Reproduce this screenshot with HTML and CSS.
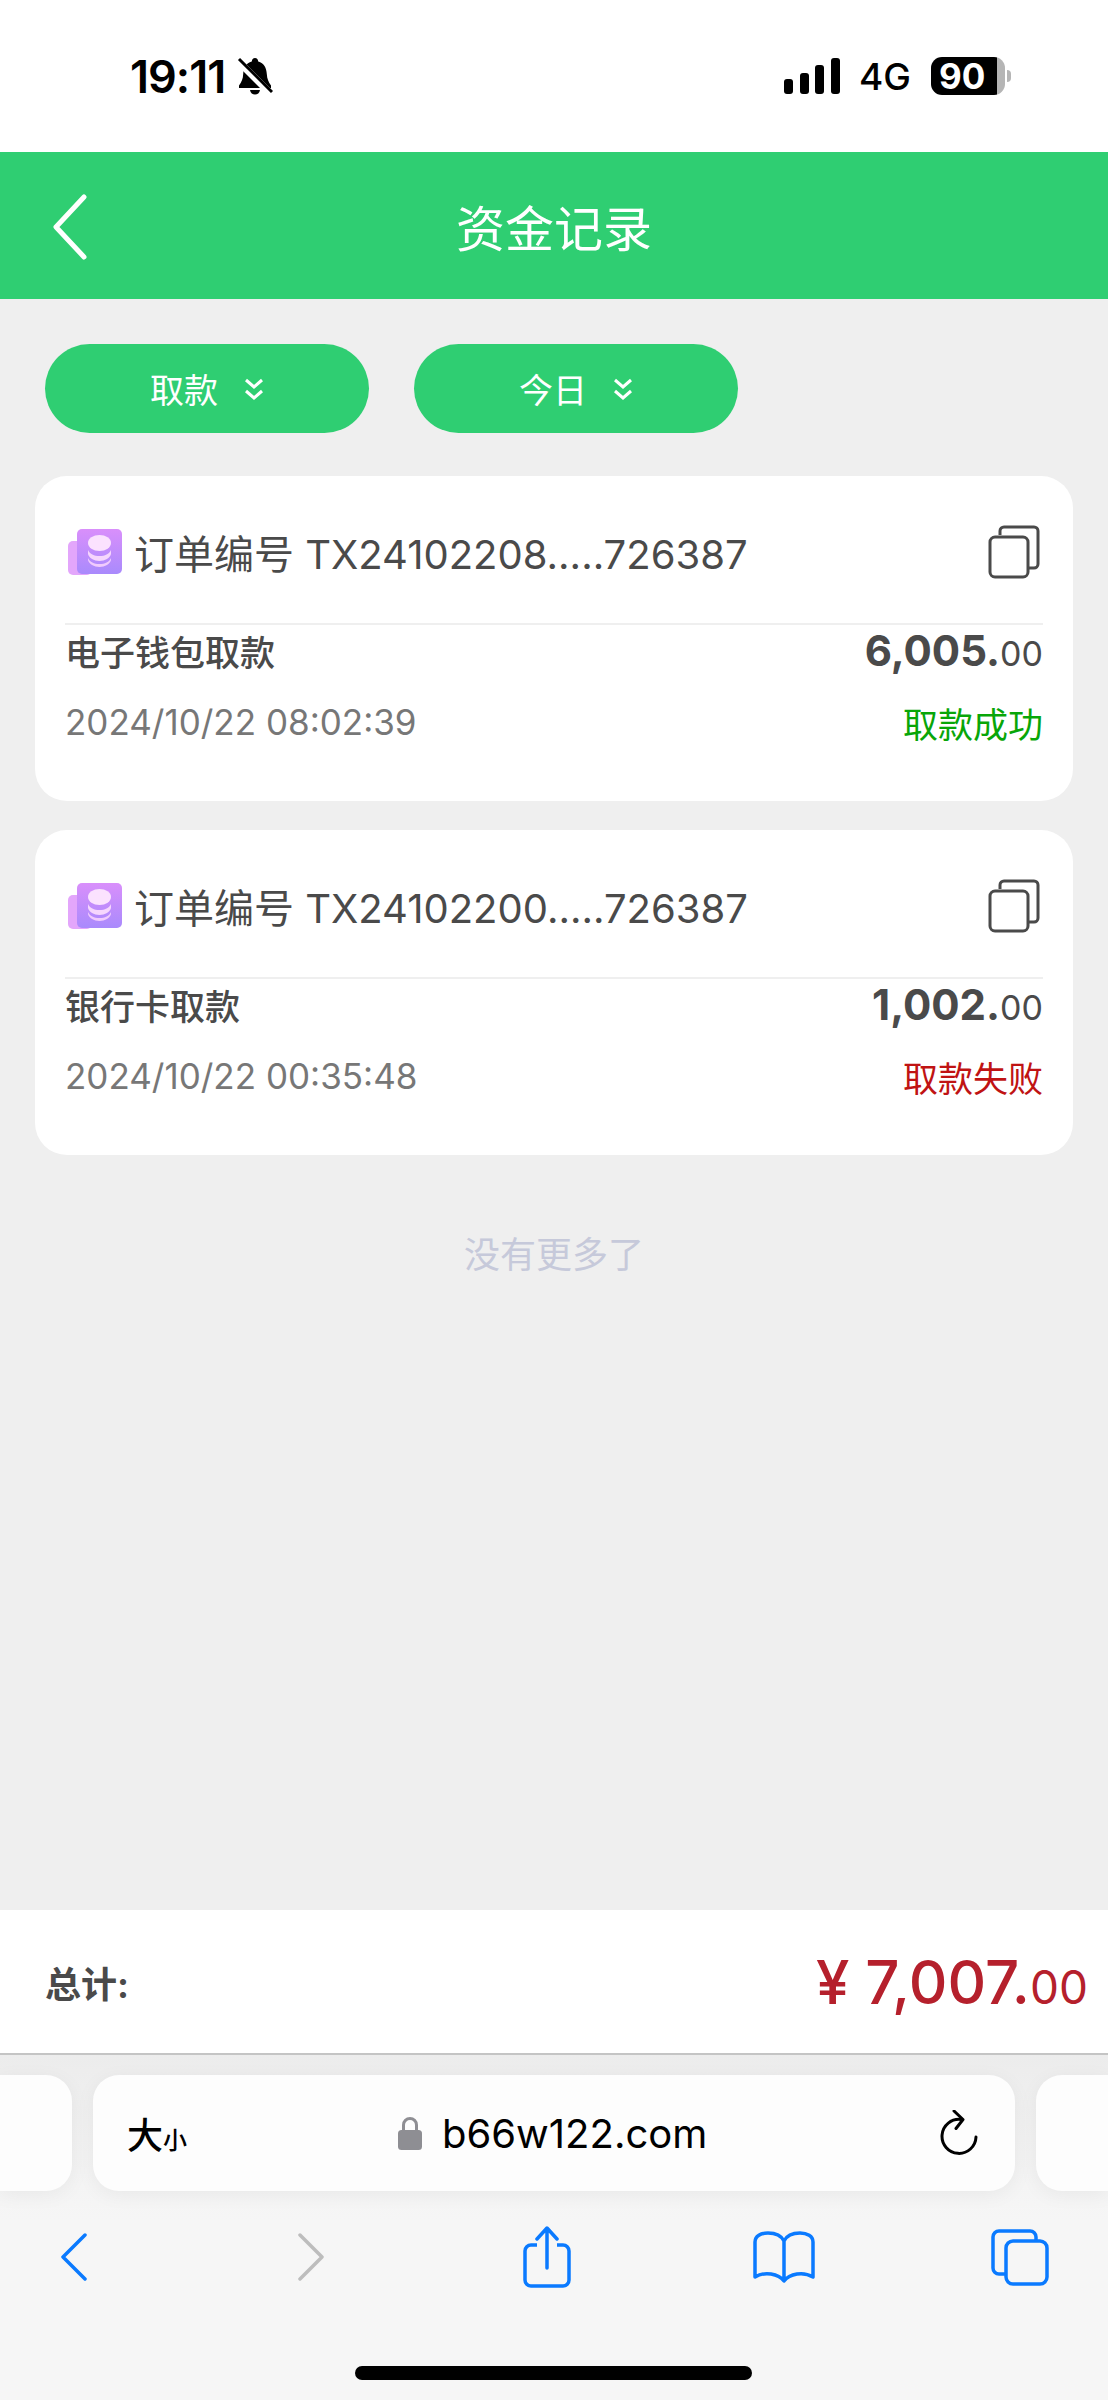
FILE: index.html
```html
<!DOCTYPE html>
<html lang="zh-CN">
<head>
<meta charset="UTF-8">
<meta name="viewport" content="width=device-width, initial-scale=1.0">
<title>资金记录</title>
<link rel="stylesheet" href="styles.css">
</head>
<body>
<div class="status-bar">
    <div class="status-left">
        <span class="clock">19:11</span>
        <svg class="bell" viewBox="0 0 36 38" width="36" height="38">
            <path d="M18 1c2 0 3 1.500 3.200 3.500C27 6 29.500 11 29.800 17c.3 5 1.700 8 4.200 11.500V31H2v-2.500C4.500 25 6 22 6.200 17 6.500 11 9 6 14.800 4.500 15 2.500 16 1 18 1z" fill="#000"/>
            <path d="M13 33h10c-.5 3-2.500 4.500-5 4.500S13.500 36 13 33z" fill="#000"/>
            <path d="M1 4l33 33" stroke="#fff" stroke-width="7"/>
            <path d="M2 2l33 33" stroke="#000" stroke-width="3"/>
        </svg>
    </div>
    <div class="status-right">
        <svg class="signal" viewBox="0 0 56 36" width="56" height="36">
            <rect x="0" y="21" width="9" height="15" rx="3"/>
            <rect x="16" y="15" width="9" height="21" rx="3"/>
            <rect x="31" y="7" width="9" height="29" rx="3"/>
            <rect x="47" y="0" width="9" height="36" rx="3"/>
        </svg>
        <span class="net">4G</span>
        <div class="battery">
            <div class="battery-body"><span class="battery-level">90</span></div>
            <div class="battery-nub"></div>
        </div>
    </div>
</div>

<div class="header">
    <svg class="back" viewBox="0 0 40 68" width="40" height="68">
        <path d="M34 4L6 34l28 30" transform="translate(0 0)" fill="none" stroke="#fff" stroke-width="5" stroke-linecap="round" stroke-linejoin="round"/>
    </svg>
    <div class="title">资金记录</div>
</div>

<div class="filters">
    <div class="pill">取款
        <svg class="dbl" viewBox="0 0 20 24" width="20" height="24"><path d="M2 3l8 7 8-7M2 14l8 7 8-7" fill="none" stroke="#fff" stroke-width="3"/></svg>
    </div>
    <div class="pill">今日
        <svg class="dbl" viewBox="0 0 20 24" width="20" height="24"><path d="M2 3l8 7 8-7M2 14l8 7 8-7" fill="none" stroke="#fff" stroke-width="3"/></svg>
    </div>
</div>

<div class="content">
    <div class="card">
        <div class="card-top">
            <svg class="coin" viewBox="0 0 56 46" width="56" height="46">
                <defs>
                    <linearGradient id="g1" x1="0" y1="0" x2="0" y2="1"><stop offset="0" stop-color="#d98ffb"/><stop offset="1" stop-color="#a98afc"/></linearGradient>
                </defs>
                <rect x="0" y="12" width="24" height="34" rx="5" fill="#e3a6fb"/>
                <rect x="9" y="0" width="45" height="45" rx="5" fill="url(#g1)"/>
                <ellipse cx="31.500" cy="14" rx="11.500" ry="8" fill="#fbe2fe"/>
                <path d="M20 21c2 4 6 6 11.500 6S41 25 43 21v4c-1 4-6 7-11.500 7S21 29 20 25z" fill="#f6d6fd"/>
                <path d="M20 29c2 4 6 6 11.500 6S41 33 43 29v2c-1 4-6 7-11.500 7S21 35 20 31z" fill="#f1cbfd"/>
            </svg>
            <span class="order-no">订单编号 TX24102208.....726387</span>
            <svg class="copy" viewBox="0 0 52 54" width="52" height="54">
                <path d="M12 10V6a4 4 0 0 1 4-4h30a4 4 0 0 1 4 4v33a4 4 0 0 1-4 4h-6" fill="none" stroke="#4a4a4a" stroke-width="3"/>
                <rect x="2" y="12" width="38" height="40" rx="5" fill="none" stroke="#4a4a4a" stroke-width="3"/>
            </svg>
        </div>
        <div class="row">
            <span class="kind">电子钱包取款</span>
            <span class="amount">6,005.<small>00</small></span>
        </div>
        <div class="row row-date">
            <span class="date">2024/10/22 08:02:39</span>
            <span class="state ok">取款成功</span>
        </div>
    </div>

    <div class="card">
        <div class="card-top">
            <svg class="coin" viewBox="0 0 56 46" width="56" height="46">
                <rect x="0" y="12" width="24" height="34" rx="5" fill="#e3a6fb"/>
                <rect x="9" y="0" width="45" height="45" rx="5" fill="url(#g1)"/>
                <ellipse cx="31.500" cy="14" rx="11.500" ry="8" fill="#fbe2fe"/>
                <path d="M20 21c2 4 6 6 11.500 6S41 25 43 21v4c-1 4-6 7-11.500 7S21 29 20 25z" fill="#f6d6fd"/>
                <path d="M20 29c2 4 6 6 11.500 6S41 33 43 29v2c-1 4-6 7-11.500 7S21 35 20 31z" fill="#f1cbfd"/>
            </svg>
            <span class="order-no">订单编号 TX24102200.....726387</span>
            <svg class="copy" viewBox="0 0 52 54" width="52" height="54">
                <path d="M12 10V6a4 4 0 0 1 4-4h30a4 4 0 0 1 4 4v33a4 4 0 0 1-4 4h-6" fill="none" stroke="#4a4a4a" stroke-width="3"/>
                <rect x="2" y="12" width="38" height="40" rx="5" fill="none" stroke="#4a4a4a" stroke-width="3"/>
            </svg>
        </div>
        <div class="row">
            <span class="kind">银行卡取款</span>
            <span class="amount">1,002.<small>00</small></span>
        </div>
        <div class="row row-date">
            <span class="date">2024/10/22 00:35:48</span>
            <span class="state fail">取款失败</span>
        </div>
    </div>

    <div class="no-more">没有更多了</div>
</div>

<div class="total">
    <span class="total-label">总计:</span>
    <span class="total-value">¥ 7,007.<small>00</small></span>
</div>

<div class="safari">
    <div class="tabs-strip">
        <div class="side-pill side-left"></div>
        <div class="url-pill">
            <span class="aa">大<small>小</small></span>
            <div class="url">
                <svg class="lock" viewBox="0 0 24 33" width="24" height="33">
                    <path d="M5.500 14V8a6.500 6.500 0 0 1 13 0v6" fill="none" stroke="#8e8e93" stroke-width="3"/>
                    <rect x="0" y="13" width="24" height="20" rx="3.500" fill="#8e8e93"/>
                </svg>
                <span>b66w122.com</span>
            </div>
            <svg class="reload" viewBox="0 0 38 46" width="38" height="46">
                <path d="M21 9.500A17 17 0 1 0 36 27" transform="translate(0 0)" fill="none" stroke="#000" stroke-width="3" stroke-linecap="round"/>
                <path d="M14 1l9 8.500-7 9" fill="none" stroke="#000" stroke-width="3" stroke-linecap="round" stroke-linejoin="round"/>
            </svg>
        </div>
        <div class="side-pill side-right"></div>
    </div>
    <div class="nav">
        <div class="nav-item">
            <svg viewBox="0 0 28 48" width="28" height="48"><path d="M25 2L3 24l0 0 22 22" transform="translate(0 0)" fill="none" stroke="#0a7aff" stroke-width="3.500" stroke-linecap="round" stroke-linejoin="round"/></svg>
        </div>
        <div class="nav-item">
            <svg viewBox="0 0 28 48" width="28" height="48"><path d="M3 2l22 22L3 46" fill="none" stroke="#bdbdbd" stroke-width="3.500" stroke-linecap="round" stroke-linejoin="round"/></svg>
        </div>
        <div class="nav-item">
            <svg viewBox="0 0 48 62" width="48" height="62">
                <path d="M14 19H8a6 6 0 0 0-6 6v29a6 6 0 0 0 6 6h32a6 6 0 0 0 6-6V25a6 6 0 0 0-6-6h-6" fill="none" stroke="#0a7aff" stroke-width="3.500"/>
                <path d="M24 42V3M14 13L24 2l10 11" fill="none" stroke="#0a7aff" stroke-width="3.500" stroke-linecap="round" stroke-linejoin="round"/>
            </svg>
        </div>
        <div class="nav-item">
            <svg viewBox="0 0 62 52" width="62" height="52">
                <path d="M31 10C28 4 22 2 15 2 8 2 2 5 2 11v35c5-3 10-4 16-3 6 1 10 3 13 7 3-4 7-6 13-7 6-1 11 0 16 3V11c0-6-6-9-13-9-7 0-13 2-16 8zM31 10v40" fill="none" stroke="#0a7aff" stroke-width="3.500" stroke-linejoin="round"/>
            </svg>
        </div>
        <div class="nav-item">
            <svg viewBox="0 0 60 58" width="60" height="58">
                <path d="M46 12V9a6 6 0 0 0-6-6H9a6 6 0 0 0-6 6v31a6 6 0 0 0 6 6h6" fill="none" stroke="#0a7aff" stroke-width="3.500"/>
                <rect x="16" y="13" width="41" height="43" rx="7" fill="none" stroke="#0a7aff" stroke-width="3.500"/>
            </svg>
        </div>
    </div>
    <div class="home-bar"></div>
</div>
</body>
</html>
```

FILE: styles.css
```css
* {
    box-sizing: border-box;
}
body {
    margin: 0;
    height: 2400px;
    display: flex;
    flex-direction: column;
    background: #efefef;
    font-family: Inter, "Noto Sans CJK SC", sans-serif;
    color: #4a4a4a;
}
svg {
    display: block;
    flex-shrink: 0;
}
small {
    font-weight: 400;
}

/* status bar */
.status-bar {
    height: 152px;
    background: #fff;
    display: flex;
    justify-content: space-between;
    align-items: center;
    padding: 0 97px 0 130px;
    flex-shrink: 0;
}
.status-left,
.status-right {
    display: flex;
    align-items: center;
}
.clock {
    font-size: 45px;
    font-weight: 600;
    color: #000;
    letter-spacing: -1px;
}
.bell {
    margin-left: 12px;
}
.net {
    font-size: 37px;
    font-weight: 500;
    color: #000;
    margin-left: 19px;
}
.battery {
    display: flex;
    align-items: center;
    margin-left: 20px;
}
.battery-body {
    width: 74px;
    height: 38px;
    border-radius: 11px;
    background: linear-gradient(to right, #000 89%, #b5b5b5 89%);
    display: flex;
    align-items: center;
    padding-left: 8px;
}
.battery-level {
    color: #fff;
    font-size: 35px;
    font-weight: 700;
    line-height: 1;
}
.battery-nub {
    width: 4px;
    height: 12px;
    margin-left: 2px;
    border-radius: 0 4px 4px 0;
    background: #b5b5b5;
}

/* header */
.header {
    height: 147px;
    background: #2fce72;
    position: relative;
    display: flex;
    align-items: center;
    justify-content: center;
    flex-shrink: 0;
}
.back {
    position: absolute;
    left: 50px;
    top: 41px;
}
.title {
    color: #fff;
    font-size: 49px;
    font-weight: 400;
}

/* filters */
.filters {
    display: flex;
    gap: 45px;
    padding: 45px 0 0 45px;
    flex-shrink: 0;
}
.pill {
    width: 324px;
    height: 89px;
    border-radius: 45px;
    background: #2fce72;
    color: #fff;
    font-size: 34px;
    display: flex;
    align-items: center;
    justify-content: center;
    gap: 26px;
}

/* record list */
.content {
    flex: 1;
    padding: 43px 35px 0;
    display: flex;
    flex-direction: column;
    gap: 29px;
}
.card {
    background: #fff;
    border-radius: 32px;
    height: 325px;
    padding: 0 30px;
}
.card-top {
    height: 149px;
    border-bottom: 2px solid #efefef;
    display: flex;
    align-items: center;
    padding-top: 4px;
}
.coin {
    margin-left: 3px;
}
.order-no {
    font-size: 40px;
    margin-left: 10px;
    flex: 1;
    white-space: nowrap;
    color: #4a4a4a;
}
.copy {
    margin-right: 3px;
}
.row {
    display: flex;
    justify-content: space-between;
    align-items: center;
    height: 50px;
}
.row-date {
    margin-top: 22px;
}
.kind {
    font-size: 35px;
    font-weight: 500;
}
.amount {
    font-size: 42px;
    font-weight: 700;
}
.amount small {
    font-size: 34px;
}
.date {
    font-size: 35px;
    color: #777;
}
.state {
    font-size: 35px;
}
.ok {
    color: #08a608;
}
.fail {
    color: #c01313;
}
.no-more {
    text-align: center;
    font-size: 36px;
    color: #c6c9da;
    margin-top: 42px;
}

/* total */
.total {
    height: 145px;
    background: #fff;
    border-bottom: 2px solid #c4c4c4;
    display: flex;
    justify-content: space-between;
    align-items: center;
    padding: 0 20px 0 45px;
    flex-shrink: 0;
}
.total-label {
    font-size: 36px;
    font-weight: 700;
}
.total-value {
    font-size: 60px;
    font-weight: 500;
    color: #b5202c;
}
.total-value small {
    font-size: 46px;
}

/* safari chrome */
.safari {
    height: 345px;
    background: linear-gradient(to bottom, #ececec, #f6f6f6 48%);
    flex-shrink: 0;
    position: relative;
    padding-top: 20px;
}
.tabs-strip {
    display: flex;
    gap: 21px;
    height: 116px;
}
.side-pill,
.url-pill {
    background: #fdfdfd;
    border-radius: 26px;
    box-shadow: 0 4px 20px rgba(0, 0, 0, 0.05);
}
.side-pill {
    flex: 1;
}
.side-left {
    border-radius: 0 26px 26px 0;
}
.side-right {
    border-radius: 26px 0 0 26px;
}
.url-pill {
    width: 922px;
    display: flex;
    align-items: center;
    justify-content: space-between;
    position: relative;
    padding: 0 37px 0 34px;
}
.aa {
    font-size: 36px;
    font-weight: 500;
    color: #000;
}
.aa small {
    font-size: 24px;
    font-weight: 500;
}
.url {
    position: absolute;
    left: 305px;
    top: 0;
    height: 100%;
    display: flex;
    align-items: center;
    gap: 20px;
    font-size: 40px;
    color: #000;
}
.nav {
    display: flex;
    justify-content: space-between;
    align-items: center;
    padding: 31px 58px 0 44px;
    height: 100px;
}
.nav-item {
    width: 60px;
    display: flex;
    justify-content: center;
}
.home-bar {
    position: absolute;
    left: 355px;
    bottom: 20px;
    width: 397px;
    height: 14px;
    border-radius: 7px;
    background: #000;
}
```
